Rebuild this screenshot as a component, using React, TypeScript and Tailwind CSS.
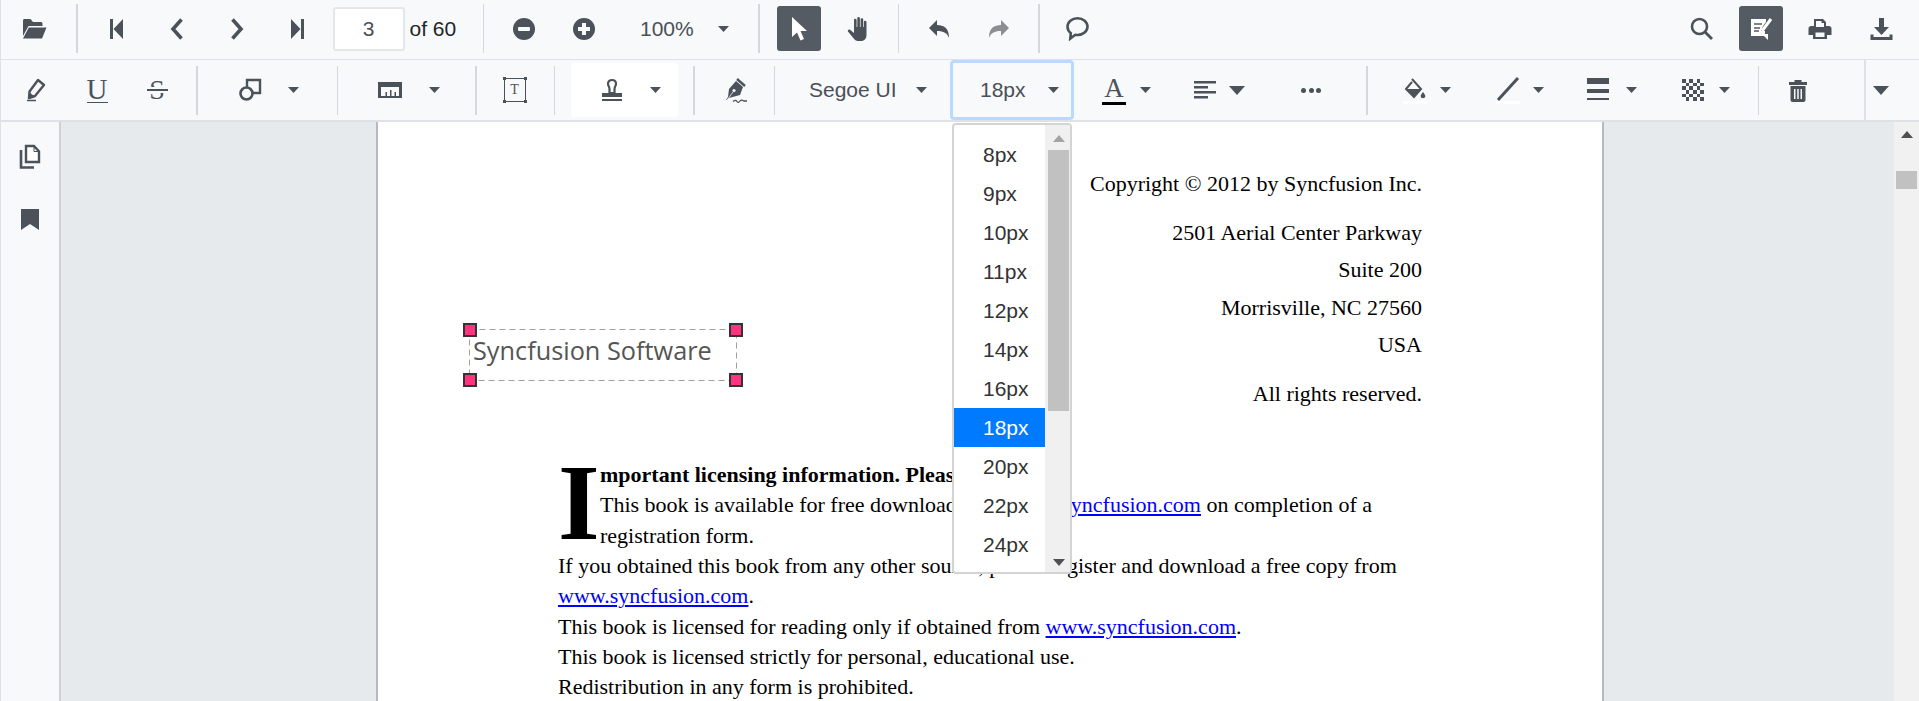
import React from "react";

const C = "#4b525a";

function Ico({ children, w = 24, h = 24, vb = "0 0 24 24" }: { children: React.ReactNode; w?: number; h?: number; vb?: string }) {
  return (
    <svg width={w} height={h} viewBox={vb} fill={C} className="block">
      {children}
    </svg>
  );
}

function Caret({ big = false }: { big?: boolean }) {
  return big ? (
    <svg width="16" height="9" viewBox="0 0 16 9" className="block shrink-0"><path d="M0 0h16L8 9z" fill={C} /></svg>
  ) : (
    <svg width="11" height="6" viewBox="0 0 11 6" className="block shrink-0"><path d="M0 0h11L5.5 6z" fill={C} /></svg>
  );
}

function Sep({ className }: { className: string }) {
  return <div className={`w-[1.5px] shrink-0 bg-[#d3d8dc] ${className}`} />;
}

function Slot({ className, children }: { className: string; children: React.ReactNode }) {
  return <div className={`flex shrink-0 items-center justify-center ${className}`}>{children}</div>;
}

const FontSizes = ["8px", "9px", "10px", "11px", "12px", "14px", "16px", "18px", "20px", "22px", "24px"];

export default function App() {
  return (
    <div className="flex h-[701px] w-[1919px] flex-col overflow-hidden border-l border-[#dee2e6] bg-[#f8f9fa] font-['Liberation_Sans',sans-serif] text-[21px] text-[#495057]">
      {/* Primary toolbar */}
      <div className="flex h-[60px] shrink-0 items-center border-b border-[#dee2e6] pb-[2px] pl-[3px]">
        <Slot className="w-[60px]">
          <Ico w={25} h={22} vb="0 0 25 22"><path d="M1 2.5C1 1.7 1.7 1 2.5 1h6l2.5 3h8c.8 0 1.5.7 1.5 1.5V8H6.5L1 18zM6.8 9.5H24.5L20 20.5H1z" /></Ico>
        </Slot>
        <Sep className="ml-[12px] h-[49px]" />
        <Slot className="ml-[9px] w-[60px]">
          <Ico w={18} h={22} vb="0 0 18 22"><path d="M2 1h3v20H2zM15 1v20L5.5 11z" /></Ico>
        </Slot>
        <Slot className="w-[60px]">
          <svg width="14" height="24" viewBox="0 0 14 24" fill="none"><path d="M11.5 2.5L3 12l8.5 9.5" stroke={C} strokeWidth="3.6" /></svg>
        </Slot>
        <Slot className="w-[60px]">
          <svg width="14" height="24" viewBox="0 0 14 24" fill="none"><path d="M2.5 2.5L11 12l-8.5 9.5" stroke={C} strokeWidth="3.6" /></svg>
        </Slot>
        <Slot className="w-[60px]">
          <Ico w={18} h={22} vb="0 0 18 22"><path d="M3 1v20l9.5-10zM13 1h3v20h-3z" /></Ico>
        </Slot>
        <div className="ml-[6px] flex h-[44px] w-[72px] shrink-0 items-center justify-center rounded-[3px] border-2 border-[#e4e6e8] bg-white text-[#495057]">3</div>
        <div className="ml-[5px] w-[60px] shrink-0 text-[#212529]">of 60</div>
        <Sep className="ml-[13px] h-[49px]" />
        <Slot className="ml-[10px] w-[60px]">
          <Ico w={22} h={22}><circle cx="12" cy="12" r="12" /><rect x="5.5" y="9.8" width="13" height="4.4" rx="1" fill="#f8f9fa" /></Ico>
        </Slot>
        <Slot className="w-[60px]">
          <Ico w={22} h={22}><circle cx="12" cy="12" r="12" /><path d="M5.5 9.8h4.3V5.5h4.4v4.3h4.3v4.4h-4.3v4.3H9.8v-4.3H5.5z" fill="#f8f9fa" /></Ico>
        </Slot>
        <div className="ml-[26px] w-[72px] shrink-0">100%</div>
        <Slot className="w-[22px]"><Caret /></Slot>
        <Sep className="ml-[24px] h-[49px]" />
        <Slot className="ml-[17px] h-[45px] w-[44px] rounded-[3px] bg-[#555b63]">
          <svg width="18" height="26" viewBox="0 0 18 26"><path d="M2 1v20l5-4.5 3.5 8 3.5-1.5-3.5-8H17z" fill="#fff" /></svg>
        </Slot>
        <Slot className="ml-[14px] w-[46px]">
          <Ico w={22} h={26} vb="0 0 22 26"><path d="M7 4a1.3 1.3 0 0 1 2.6 0v7h.7V2.3a1.3 1.3 0 0 1 2.6 0V11h.7V3.5a1.3 1.3 0 0 1 2.6 0V11h.7V6a1.3 1.3 0 0 1 2.6 0v13c0 3.5-2 6-5.5 6H11c-2 0-3.2-1-4.3-2.5L1 15.500c-.9-1.200.8-2.700 2-1.700L7 17z" /></Ico>
        </Slot>
        <Sep className="ml-[17px] h-[49px]" />
        <Slot className="ml-[10px] w-[60px]">
          <Ico w={22} h={20} vb="0 0 22 20"><path d="M9 1v5c7 0 12 3 12 13-2-5-5-7-12-7v5L1 9z" /></Ico>
        </Slot>
        <Slot className="w-[60px]">
          <svg width="22" height="20" viewBox="0 0 22 20"><path d="M13 1v5C6 6 1 9 1 19c2-5 5-7 12-7v5l8-8z" fill="#8b8f94" /></svg>
        </Slot>
        <Sep className="ml-[9px] h-[49px]" />
        <Slot className="ml-[8px] w-[60px]">
          <svg width="25" height="25" viewBox="0 0 25 25" fill="none"><path d="M12.500 2.200c5.700 0 10 3.700 10 8.400s-4.300 8.400-10 8.400c-.8 0-1.500-.1-2.200-.2l-5 3.800.5-5.400c-2-1.500-3.300-4-3.300-6.600 0-4.700 4.300-8.400 10-8.400z" stroke={C} strokeWidth="2.600" /></svg>
        </Slot>
        <div className="ml-auto flex items-center">
          <Slot className="mr-[16px] w-[44px]">
            <svg width="23" height="23" viewBox="0 0 23 23" fill="none"><circle cx="9.500" cy="9.500" r="7.500" stroke={C} strokeWidth="2.600" /><path d="M15 15l7 7" stroke={C} strokeWidth="2.800" /></svg>
          </Slot>
          <Slot className="h-[45px] w-[44px] rounded-[3px] bg-[#555b63]">
            <svg width="24" height="24" viewBox="0 0 24 24" fill="none">
              <path d="M2 2h15v3l-3 4-2 5h4v3h3v6l-4-4H2z" fill="#fff" />
              <path d="M5 7h8M5 11h6M5 14h5" stroke="#555b63" strokeWidth="1.500" />
              <path d="M22 2l-9 12" stroke="#fff" strokeWidth="3" />
            </svg>
          </Slot>
          <Slot className="ml-[9px] w-[56px]">
            <svg width="24" height="22" viewBox="0 0 24 22"><path d="M6 1h9l3 3v4h3c1.300 0 2.500 1 2.500 2.500V17H19v4H5v-4H.5v-6.500C.5 9 1.700 8 3 8h3zM8 3v6h8V5h-2.500V3zM7.500 14.500V19h9v-4.500z" fill={C} fillRule="evenodd" /></svg>
          </Slot>
          <Slot className="ml-[3px] w-[60px]">
            <svg width="24" height="24" viewBox="0 0 24 24"><path d="M10 1h5v9h5l-7.500 8L5 10h5z" fill={C} /><path d="M1.500 17.500h3V20h16v-2.500h3V23h-22z" fill={C} /></svg>
          </Slot>
          <div className="w-[8px] shrink-0" />
        </div>
      </div>

      {/* Annotation toolbar */}
      <div className="flex h-[62px] shrink-0 items-center border-b-2 border-[#dee2e6] pl-[4px]">
        <Slot className="w-[60px]">
          <svg width="22" height="24" viewBox="0 0 22 24" fill="none"><path d="M14 2l6 5-9 11-6 2 .5-6.500z" stroke={C} strokeWidth="2.400" strokeLinejoin="round" /><path d="M5 14l5.500 4.500L5 20z" fill={C} /><path d="M3 22.500h9" stroke={C} strokeWidth="1.500" /></svg>
        </Slot>
        <Slot className="ml-[2px] w-[60px]">
          <div className="flex flex-col items-center">
            <span className="font-['Liberation_Serif',serif] text-[29px] leading-[24px] text-[#4b525a]">U</span>
            <div className="mt-[1px] h-[1.5px] w-[21px] bg-[#4b525a]" />
          </div>
        </Slot>
        <Slot className="w-[60px]">
          <div className="relative flex h-[26px] w-[22px] items-center justify-center">
            <span className="font-['Liberation_Serif',serif] text-[28px] leading-[24px] text-[#4b525a]">S</span>
            <div className="absolute top-[10px] h-[6px] w-[22px] bg-[#f8f9fa]" />
            <div className="absolute top-[12px] h-[1.5px] w-[21px] bg-[#4b525a]" />
          </div>
        </Slot>
        <Sep className="ml-[9px] h-[49px]" />
        <Slot className="ml-[22px] w-[60px]">
          <svg width="24" height="24" viewBox="0 0 24 24" fill="none"><path d="M9 9V2h13v13h-7" stroke={C} strokeWidth="2.400" /><circle cx="8.500" cy="15.500" r="6" stroke={C} strokeWidth="2.600" /></svg>
        </Slot>
        <Slot className="w-[28px]"><Caret /></Slot>
        <Sep className="ml-[29px] h-[49px]" />
        <Slot className="ml-[22px] w-[60px]">
          <svg width="24" height="18" viewBox="0 0 24 18"><path d="M0 1h24v16H0zM3 6h18v9h-3v-4h-1.500v4h-3V9H12v6H9v-4H7.500v4H3z" fill={C} fillRule="evenodd" /></svg>
        </Slot>
        <Slot className="w-[28px]"><Caret /></Slot>
        <Sep className="ml-[27px] h-[49px]" />
        <Slot className="ml-[8px] w-[60px]">
          <div className="relative flex h-[24px] w-[22px] items-center justify-center border border-[#4b525a]">
            <span className="font-['Liberation_Serif',serif] text-[14px] leading-none text-[#4b525a]">T</span>
            <div className="absolute -left-[2px] -top-[2px] h-[3px] w-[3px] bg-[#4b525a]" />
            <div className="absolute -right-[2px] -top-[2px] h-[3px] w-[3px] bg-[#4b525a]" />
            <div className="absolute -bottom-[2px] -left-[2px] h-[3px] w-[3px] bg-[#4b525a]" />
            <div className="absolute -bottom-[2px] -right-[2px] h-[3px] w-[3px] bg-[#4b525a]" />
          </div>
        </Slot>
        <Sep className="ml-[9px] h-[49px]" />
        <div className="ml-[16px] flex h-[54px] w-[107px] shrink-0 items-center rounded-[3px] bg-white">
          <Slot className="ml-[11px] w-[60px]">
            <svg width="22" height="25" viewBox="0 0 22 25" fill="none"><path d="M11 2c2.500 0 4 1.700 4 3.800 0 2-1.500 3.200-1.500 5.200V15H8.500v-4C8.500 9 7 7.800 7 5.800 7 3.700 8.500 2 11 2z" stroke={C} strokeWidth="2.200" /><path d="M1 15h20v4H1zM1 21h20v2H1z" fill={C} /></svg>
          </Slot>
          <Slot className="-ml-[1px] w-[28px]"><Caret /></Slot>
        </div>
        <Sep className="ml-[15px] h-[49px]" />
        <Slot className="ml-[10px] w-[60px]">
          <svg width="26" height="26" viewBox="0 0 26 26" fill="none">
            <path d="M14 4l7 6-3 8-11 3-3.500 2.500L6 20l1-8z" fill={C} />
            <path d="M15 2l8 7" stroke={C} strokeWidth="2.400" />
            <circle cx="12" cy="13.500" r="1.600" fill="#f8f9fa" />
            <path d="M5.500 22.500l5.500-7.500" stroke="#f8f9fa" strokeWidth="0.800" />
            <path d="M11 24.500c2-1.500 3-1.500 4 0s2 1 3-.5 2.500-1 4 0l3 0" stroke={C} strokeWidth="1.300" />
          </svg>
        </Slot>
        <Sep className="ml-[9px] h-[49px]" />
        <div className="ml-[34px] w-[107px] shrink-0">Segoe UI</div>
        <Slot className="w-[11px]"><Caret /></Slot>
        <div className="ml-[23px] flex h-[60px] w-[124px] shrink-0 items-center rounded-[4px] border-[3px] border-[#b9dafe]">
          <div className="ml-[27px] w-[68px] shrink-0">18px</div>
          <Caret />
        </div>
        <Slot className="ml-[14px] w-[52px]">
          <div className="flex flex-col items-center">
            <span className="font-['Liberation_Serif',serif] text-[27px] leading-[26px] text-[#4b525a]">A</span>
            <div className="mt-[1px] h-[3px] w-[24px] bg-black" />
          </div>
        </Slot>
        <Slot className="w-[11px]"><Caret /></Slot>
        <Slot className="ml-[24px] w-[60px]">
          <svg width="22" height="22" viewBox="0 0 22 22"><path d="M0 2h22v2.500H0zM0 7h14v2.500H0zM0 12h22v2.500H0zM0 17h14v2.500H0z" fill={C} /></svg>
        </Slot>
        <Slot className="-ml-[6px] w-[16px]"><Caret big /></Slot>
        <Slot className="ml-[36px] w-[60px]">
          <div className="flex gap-[2.500px]">
            <div className="h-[5px] w-[5px] rounded-full bg-[#4b525a]" />
            <div className="h-[5px] w-[5px] rounded-full bg-[#4b525a]" />
            <div className="h-[5px] w-[5px] rounded-full bg-[#4b525a]" />
          </div>
        </Slot>
        <Sep className="ml-[25px] h-[49px]" />
        <Slot className="ml-[17px] w-[60px]">
          <div className="flex flex-col items-center">
            <svg width="24" height="24" viewBox="0 0 24 24" fill="none"><path d="M9 2l9 10-7 8-8-8 6-7" stroke={C} strokeWidth="2" /><path d="M3.500 12h14.500L11 20z" fill={C} /><path d="M20 15c1.500 2 2.300 3 2.300 4.300 0 2.500-4.600 2.500-4.600 0 0-1.300.8-2.300 2.300-4.300z" fill={C} /></svg>
            <div className="h-[3px] w-[24px] bg-white" />
          </div>
        </Slot>
        <Slot className="-ml-[5px] w-[11px]"><Caret /></Slot>
        <Slot className="ml-[27px] w-[60px]">
          <div className="flex flex-col items-center">
            <svg width="24" height="24" viewBox="0 0 24 24" fill="none"><path d="M22 1L2 23" stroke={C} strokeWidth="3" /></svg>
            <div className="h-[3px] w-[24px] bg-white" />
          </div>
        </Slot>
        <Slot className="-ml-[5px] w-[11px]"><Caret /></Slot>
        <Slot className="ml-[24px] w-[60px]">
          <svg width="22" height="26" viewBox="0 0 22 26"><path d="M0 1h22v6H0zM0 12h22v4H0zM0 21h22v2H0z" fill={C} /></svg>
        </Slot>
        <Slot className="ml-[-2px] w-[11px]"><Caret /></Slot>
        <Slot className="ml-[26px] w-[60px]">
          <svg width="22" height="24" viewBox="0 0 6 6" shapeRendering="crispEdges"><path d="M0 0h1v1H0zM2 0h1v1H2zM4 0h1v1H4zM1 1h1v1H1zM3 1h1v1H3zM5 1h1v1H5zM0 2h1v1H0zM2 2h1v1H2zM4 2h1v1H4zM1 3h1v1H1zM3 3h1v1H3zM5 3h1v1H5zM0 4h1v1H0zM2 4h1v1H2zM4 4h1v1H4zM1 5h1v1H1zM3 5h1v1H3zM5 5h1v1H5z" fill={C} /></svg>
        </Slot>
        <Slot className="-ml-[4px] w-[11px]"><Caret /></Slot>
        <Sep className="ml-[28px] h-[49px]" />
        <Slot className="ml-[9px] w-[60px]">
          <svg width="18" height="23" viewBox="0 0 18 23"><path d="M5.500 1h7v2H18v3H0V3h5.500zM1.500 7h15v14c0 1-.8 2-2 2h-11c-1.200 0-2-1-2-2zM5 10v10h1.500V10zM8.250 10v10h1.500V10zM11.500 10v10H13V10z" fill={C} fillRule="evenodd" /></svg>
        </Slot>
        <div className="ml-[36px] h-[60px] w-[2px] shrink-0 bg-[#dee2e6]" />
        <Slot className="ml-[7px] w-[16px]"><Caret big /></Slot>
      </div>

      {/* Viewer */}
      <div className="flex min-h-0 flex-1">
        <div className="flex w-[60px] shrink-0 flex-col items-center border-r-2 border-[#ced2d6] bg-[#f8f9fa] pt-[22px]">
          <svg width="22" height="25" viewBox="0 0 22 25" fill="none">
            <path d="M7 2h8l5 5.500V18H7z" stroke={C} strokeWidth="2.400" fill="#fff" />
            <path d="M15 2v5.500h5" stroke={C} strokeWidth="1" />
            <path d="M2 6v17.500h13" stroke={C} strokeWidth="2.600" />
          </svg>
          <svg width="18" height="21" viewBox="0 0 18 21" className="mt-[40px]"><path d="M0 0h18v21l-9-6-9 6z" fill={C} /></svg>
        </div>

        <div className="flex min-w-0 flex-1 bg-[#e7eaed] pl-[315px]">
          <div className="relative h-full w-[1228px] shrink-0 border-x-2 border-[#b4bac0] bg-white font-['Liberation_Serif',serif] text-[22px] text-black">
            <div className="pr-[180px] pt-[47px] text-right">
              <div className="h-[30px] leading-[30px]">Copyright © 2012 by Syncfusion Inc.</div>
              <div className="mt-[15px] leading-[37.3px]">
                <div>2501 Aerial Center Parkway</div>
                <div>Suite 200</div>
                <div>Morrisville, NC 27560</div>
                <div>USA</div>
              </div>
              <div className="mt-[16px] h-[30px] leading-[30px]">All rights reserved.</div>
            </div>

            <div className="mt-[51px] pl-[180px] leading-[30.3px]">
              <div className="float-left h-[90px] w-[42px] text-[107px] font-bold leading-[86px]">I</div>
              <div className="font-bold">mportant licensing information. Please read.</div>
              <div>This book is available for free download from <a className="text-[#0000ff] underline">www.syncfusion.com</a> on completion of a</div>
              <div>registration form.</div>
              <div>If you obtained this book from any other source, please register and download a free copy from</div>
              <div><a className="text-[#0000ff] underline">www.syncfusion.com</a>.</div>
              <div>This book is licensed for reading only if obtained from <a className="text-[#0000ff] underline">www.syncfusion.com</a>.</div>
              <div>This book is licensed strictly for personal, educational use.</div>
              <div>Redistribution in any form is prohibited.</div>
            </div>

            {/* Selected free-text annotation */}
            <div className="absolute left-[91px] top-[207px] flex h-[52px] w-[268px] items-center pb-[9px] pl-[4px] font-['Open_Sans',sans-serif] text-[25.3px] text-[#555]">
              <svg width="268" height="52" className="absolute left-0 top-0" fill="none"><rect x="0.500" y="0.500" width="267" height="51" stroke="#a0a0a0" strokeDasharray="6 4" /></svg>
              <span className="relative">Syncfusion Software</span>
              <div className="absolute -left-[6px] -top-[6px] h-[14px] w-[14px] border-2 border-[#333] bg-[#ff3380]" />
              <div className="absolute -right-[6px] -top-[6px] h-[14px] w-[14px] border-2 border-[#333] bg-[#ff3380]" />
              <div className="absolute -bottom-[6px] -left-[6px] h-[14px] w-[14px] border-2 border-[#333] bg-[#ff3380]" />
              <div className="absolute -bottom-[6px] -right-[6px] h-[14px] w-[14px] border-2 border-[#333] bg-[#ff3380]" />
            </div>

            {/* Font size popup */}
            <div className="absolute left-[574px] top-[1px] flex h-[451px] w-[120px] overflow-hidden rounded-[4px] border-2 border-[#d4d4d4] bg-white font-['Liberation_Sans',sans-serif] text-[21px] text-[#333]">
              <div className="w-[91px] shrink-0 pt-[10px]">
                {FontSizes.map((s) => (
                  <div key={s} className={`h-[39px] pl-[29px] leading-[39px] ${s === "18px" ? "bg-[#007bff] text-white" : ""}`}>
                    {s}
                  </div>
                ))}
              </div>
              <div className="flex w-[25px] shrink-0 flex-col items-center bg-[#f0f0f0] pl-[2px]">
                <svg width="12" height="7" viewBox="0 0 12 7" className="mt-[10px]"><path d="M0 7h12L6 0z" fill="#a3a3a3" /></svg>
                <div className="mt-[8px] h-[261px] w-[21px] bg-[#c1c1c1]" />
                <svg width="12" height="7" viewBox="0 0 12 7" className="mt-auto mb-[6px]"><path d="M0 0h12L6 7z" fill="#505050" /></svg>
              </div>
            </div>
          </div>

          <div className="ml-auto flex w-[25px] shrink-0 flex-col items-center bg-[#f1f1f1]">
            <svg width="12" height="7" viewBox="0 0 12 7" className="mt-[9px]"><path d="M0 7h12L6 0z" fill="#505050" /></svg>
            <div className="mt-[33px] h-[18px] w-[21px] bg-[#c1c1c1]" />
          </div>
        </div>
      </div>
    </div>
  );
}
